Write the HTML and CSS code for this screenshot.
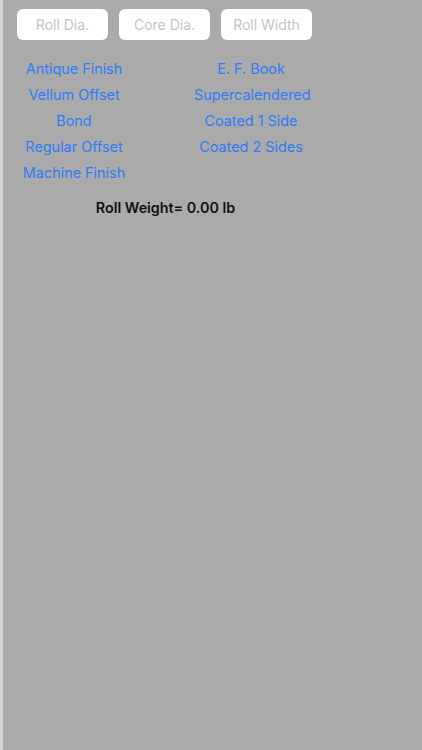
FILE: index.html
```html
<!DOCTYPE html>
<html>
<head>
<meta charset="utf-8">
<link rel="stylesheet" href="styles.css">
</head>
<body>
<div class="screen">
  <div class="fields">
    <div class="field">Roll Dia.</div>
    <div class="field">Core Dia.</div>
    <div class="field">Roll Width</div>
  </div>
  <div class="grades">
    <a class="grade">Antique Finish</a>
    <a class="grade">E. F. Book</a>
    <a class="grade">Vellum Offset</a>
    <a class="grade">Supercalendered</a>
    <a class="grade">Bond</a>
    <a class="grade">Coated 1 Side</a>
    <a class="grade">Regular Offset</a>
    <a class="grade">Coated 2 Sides</a>
    <a class="grade">Machine Finish</a>
  </div>
  <div class="result">Roll Weight= 0.00 lb</div>
</div>
</body>
</html>
```

FILE: styles.css
```css
html, body {
  margin: 0;
  padding: 0;
  height: 100%;
}
body {
  background: #aaaaaa;
  font-family: Inter, "Noto Sans", "Liberation Sans", sans-serif;
}
.screen {
  min-height: 750px;
  box-sizing: border-box;
  border-left: 3px solid #d4d4d4;
  padding: 9px 0 0 14px;
}
.fields {
  display: flex;
  gap: 11px;
}
.field {
  width: 91px;
  height: 31px;
  background: #ffffff;
  border-radius: 6px;
  color: #c4c4c8;
  font-size: 14px;
  display: flex;
  align-items: center;
  justify-content: center;
}
.grades {
  display: grid;
  grid-template-columns: 114px 114px;
  column-gap: 63px;
  margin-top: 16px;
}
.grade {
  color: #2f7cf6;
  font-size: 14.4px;
  line-height: 26px;
  text-align: center;
  white-space: nowrap;
}
.result {
  width: 297px;
  margin-top: 9px;
  text-align: center;
  font-size: 14.3px;
  font-weight: 600;
  line-height: 26px;
  color: #111111;
}
```
